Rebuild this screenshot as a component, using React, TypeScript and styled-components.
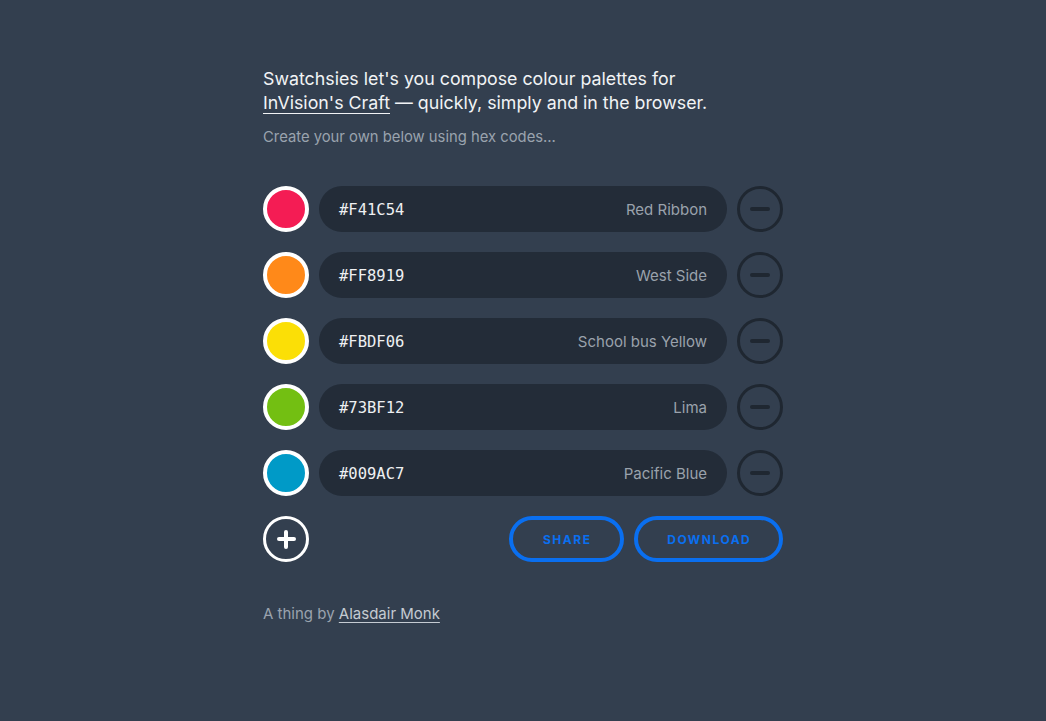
import React from "react";
import styled, { createGlobalStyle } from "styled-components";

const Global = createGlobalStyle`
  html, body { margin: 0; padding: 0; background: #333f4f; }
  body { font-family: Inter, "Helvetica Neue", Arial, sans-serif; -webkit-font-smoothing: antialiased; }
`;

const Page = styled.div`
  min-height: 721px;
  background: #333f4f;
  display: flex;
  justify-content: center;
  padding-top: 67px;
  box-sizing: border-box;
`;

const Container = styled.main`
  width: 520px;
  display: flex;
  flex-direction: column;
`;

const Intro = styled.p`
  margin: 0;
  font-size: 17.8px;
  line-height: 24px;
  color: #f1f3f5;
`;

const Link = styled.a`
  color: inherit;
  text-decoration: underline;
  text-underline-offset: 4px;
  text-decoration-thickness: 1px;
`;

const Sub = styled.p`
  margin: 11px 0 0;
  font-size: 14.8px;
  line-height: 22px;
  color: #9aa3ae;
`;

const List = styled.div`
  margin-top: 38px;
  display: flex;
  flex-direction: column;
  gap: 20px;
`;

const Row = styled.div`
  display: flex;
  align-items: center;
  gap: 10px;
`;

const Swatch = styled.div<{ $c: string }>`
  width: 46px;
  height: 46px;
  border-radius: 50%;
  border: 4px solid #ffffff;
  background: ${(p) => p.$c};
  box-sizing: border-box;
  flex: none;
`;

const Field = styled.div`
  flex: 1;
  height: 46px;
  border-radius: 23px;
  background: #232c38;
  display: flex;
  align-items: center;
  justify-content: space-between;
  padding: 0 20px;
  box-sizing: border-box;
`;

const Hex = styled.span`
  font-family: "DejaVu Sans Mono", "Liberation Mono", monospace;
  font-size: 15.5px;
  color: #eef0f2;
  padding-top: 2px;
`;

const Name = styled.span`
  font-size: 15px;
  color: #9aa2ac;
`;

const IconButton = styled.button<{ $light?: boolean }>`
  width: 46px;
  height: 46px;
  flex: none;
  border-radius: 50%;
  border: 3px solid ${(p) => (p.$light ? "#ffffff" : "#1f2731")};
  background: transparent;
  padding: 0;
  display: flex;
  align-items: center;
  justify-content: center;
  box-sizing: border-box;
  cursor: pointer;
`;

const Bar = styled.span<{ $light?: boolean; $v?: boolean }>`
  position: absolute;
  background: ${(p) => (p.$light ? "#ffffff" : "#1f2731")};
  border-radius: 2px;
  width: ${(p) => (p.$v ? "4px" : p.$light ? "19px" : "20px")};
  height: ${(p) => (p.$v ? "19px" : "4px")};
`;

const Glyph = styled.span`
  position: relative;
  width: 20px;
  height: 20px;
  display: flex;
  align-items: center;
  justify-content: center;
`;

const Actions = styled.div`
  margin-top: 20px;
  display: flex;
  align-items: center;
`;

const Spacer = styled.div`
  flex: 1;
`;

const PillButton = styled.button<{ $w: number }>`
  width: ${(p) => p.$w}px;
  height: 46px;
  border-radius: 23px;
  border: 4px solid #0a6ff0;
  background: transparent;
  color: #0a6ff0;
  font-family: Inter, "Helvetica Neue", Arial, sans-serif;
  font-weight: 700;
  font-size: 12px;
  letter-spacing: 1.5px;
  padding: 0 0 0 1.5px;
  box-sizing: border-box;
  margin-left: 10px;
  cursor: pointer;
`;

const Footer = styled.p`
  margin: 41px 0 0;
  font-size: 15px;
  line-height: 22px;
  color: #9aa3ae;
`;

const FooterLink = styled.a`
  color: #c5cbd2;
  text-decoration: underline;
  text-underline-offset: 3px;
  text-decoration-thickness: 1px;
`;

const swatches = [
  { hex: "#F41C54", name: "Red Ribbon" },
  { hex: "#FF8919", name: "West Side" },
  { hex: "#FBDF06", name: "School bus Yellow" },
  { hex: "#73BF12", name: "Lima" },
  { hex: "#009AC7", name: "Pacific Blue" },
];

export default function App() {
  return (
    <>
      <Global />
      <Page>
        <Container>
          <Intro>
            Swatchsies let's you compose colour palettes for
            <br />
            <Link>InVision's Craft</Link> — quickly, simply and in the browser.
          </Intro>
          <Sub>Create your own below using hex codes...</Sub>
          <List>
            {swatches.map((s) => (
              <Row key={s.hex}>
                <Swatch $c={s.hex} />
                <Field>
                  <Hex>{s.hex}</Hex>
                  <Name>{s.name}</Name>
                </Field>
                <IconButton aria-label="Remove">
                  <Glyph>
                    <Bar />
                  </Glyph>
                </IconButton>
              </Row>
            ))}
          </List>
          <Actions>
            <IconButton $light aria-label="Add">
              <Glyph>
                <Bar $light />
                <Bar $light $v />
              </Glyph>
            </IconButton>
            <Spacer />
            <PillButton $w={115}>SHARE</PillButton>
            <PillButton $w={149}>DOWNLOAD</PillButton>
          </Actions>
          <Footer>
            A thing by <FooterLink>Alasdair Monk</FooterLink>
          </Footer>
        </Container>
      </Page>
    </>
  );
}
